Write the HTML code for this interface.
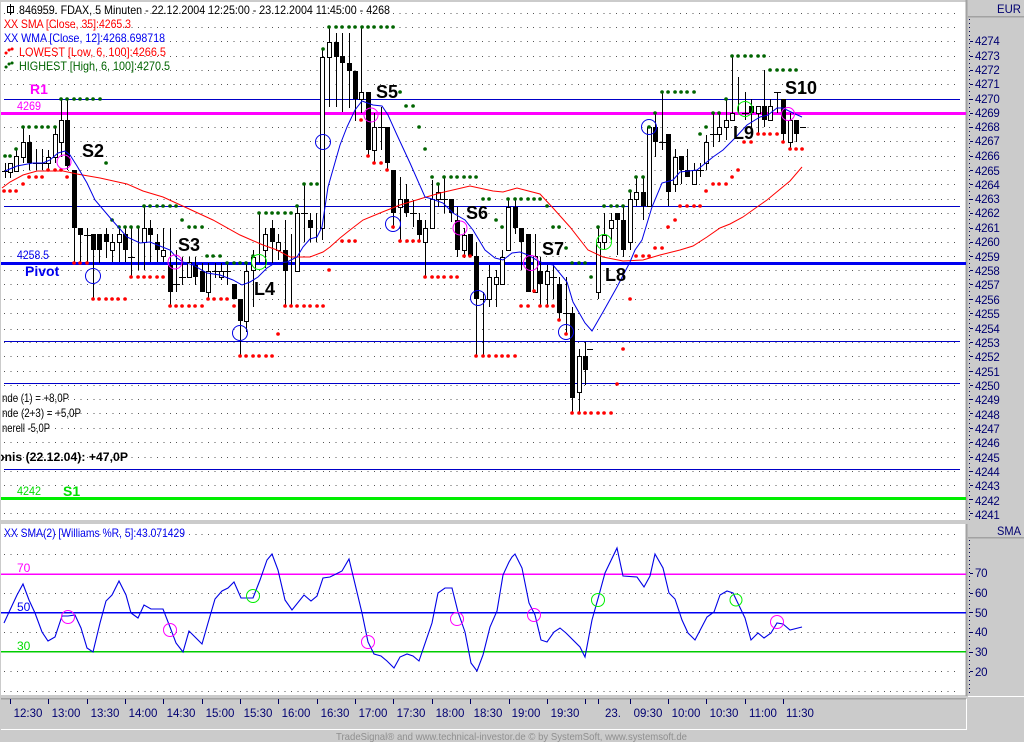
<!DOCTYPE html>
<html><head><meta charset="utf-8"><title>FDAX</title>
<style>html,body{margin:0;padding:0;background:#cbcbcb;overflow:hidden}svg{display:block}text{font-family:"Liberation Sans",sans-serif;white-space:pre}</style>
</head><body>
<svg width="1024" height="742" viewBox="0 0 1024 742" xmlns="http://www.w3.org/2000/svg">
<rect width="1024" height="742" fill="#cbcbcb"/>
<rect x="1" y="2" width="965" height="518" fill="#fff"/>
<rect x="1" y="524" width="965" height="171" fill="#fff"/>
<!-- panel frames -->
<g shape-rendering="crispEdges" fill="none">
<path d="M966.5 0V520M966.5 524V696" stroke="#a2a2a2" stroke-width="2"/>
<path d="M968 16.5H1024M968 537.5H1024M1 698.5H966" stroke="#a2a2a2" stroke-width="1.5"/>
<path d="M968 696.5H1024M0 729.5H966.5V699" stroke="#fff"/>
<path d="M0 698V729" stroke="#a2a2a2" stroke-width="2"/>
<!-- grid dots -->
<path d="M4 13.5H960M4 27.5H960M4 41.5H960M4 56.5H960M4 70.5H960M4 84.5H960M4 127.5H960M4 141.5H960M4 156.5H960M4 170.5H960M4 184.5H960M4 199.5H960M4 213.5H960M4 228.5H960M4 242.5H960M4 256.5H960M4 270.5H960M4 284.5H960M4 299.5H960M4 313.5H960M4 329.5H960M4 342.5H960M4 356.5H960M4 371.5H960M4 385.5H960M4 399.5H960M4 413.5H960M4 428.5H960M4 442.5H960M4 457.5H960M4 471.5H960M4 485.5H960M4 513.5H960M4 534.5H960M4 554.5H960M4 593.5H960M4 632.5H960M4 671.5H960M4 691.5H960" stroke="#555" stroke-dasharray="1 5.375"/>
<!-- axis dots -->
<path d="M969.5 19V520M969.5 540V696" stroke="#000050" stroke-dasharray="1 3"/>
<!-- horizontal lines -->
<path d="M4 99.5H960M4 206.5H960M4 341.5H960M4 383.5H960M4 469.5H960" stroke="#0000c8"/>
<path d="M1 113.5H966" stroke="#f0f" stroke-width="3"/>
<path d="M1 263.5H966" stroke="#0000f0" stroke-width="3"/>
<path d="M1 498.5H966" stroke="#0e0" stroke-width="3"/>
<path d="M1 574H966" stroke="#f0f" stroke-width="1.5"/>
<path d="M1 612.5H966" stroke="#0000f0" stroke-width="1.5"/>
<path d="M1 651.5H966" stroke="#0c0" stroke-width="1.5"/>
<!-- candle wicks -->
<path stroke="#000" d="M5.5 163V178M10.5 163V178M16.5 150V171M23.5 128V163M29.5 135V170M36.5 149V170M42.5 149V170M48.5 150V170M55.5 128V163M61.5 99V157M67.5 99V170M74.5 170V263M80.5 228V263M87.5 228V263M93.5 234V299M99.5 234V263M106.5 228V258M112.5 234V262M119.5 228V262M125.5 228V262M131.5 228V277M138.5 228V270M144.5 206V270M150.5 220V262M157.5 234V262M163.5 228V262M170.5 228V306M176.5 250V292M182.5 257V285M189.5 257V277M195.5 257V285M202.5 263V292M208.5 263V299M215.5 263V278M221.5 263V280M227.5 263V285M234.5 284V299M240.5 299V356M246.5 263V332M253.5 250V307M259.5 213V263M265.5 228V268M272.5 220V263M278.5 234V260M285.5 220V306M291.5 234V306M297.5 206V271M304.5 183V242M310.5 213V242M316.5 213V242M322.5 49V240M329.5 28V107M336.5 33V107M342.5 33V112M349.5 33V108M355.5 71V121M361.5 27V113M368.5 92V157M374.5 113V163M381.5 107V150M387.5 127V170M393.5 170V227M400.5 177V240M406.5 184V217M413.5 200V227M419.5 213V240M425.5 220V277M432.5 180V228M438.5 185V207M444.5 177V213M451.5 199V222M457.5 207V257M464.5 228V258M470.5 234V256M476.5 242V356M483.5 292V356M489.5 265V307M496.5 270V307M502.5 250V284M508.5 199V250M515.5 199V234M521.5 228V270M528.5 234V292M535.5 234V292M540.5 257V306M547.5 265V306M553.5 265V299M559.5 277V320M566.5 277V333M572.5 307V413M579.5 349V413M585.5 342V385M598.5 228V299M604.5 213V250M611.5 213V240M617.5 213V255M623.5 206V257M630.5 191V250M636.5 177V206M643.5 177V220M649.5 127V206M655.5 113V157M662.5 92V150M668.5 134V206M675.5 149V192M681.5 156V184M687.5 149V177M694.5 163V184M700.5 163V177M706.5 135V170M713.5 113V147M719.5 113V142M726.5 99V140M732.5 56V120M738.5 77V113M745.5 92V120M751.5 99V127M758.5 106V134M764.5 70V127M770.5 99V120M777.5 92V113M783.5 99V142M790.5 113V149M796.5 120V142"/>
<!-- doji dashes -->
<path stroke="#000" d="M2 171.5h7M33 163.5h7M39 163.5h7M84 235.5h7M128 257.5h7M173 284.5h7M179 277.5h7M212 271.5h7M224 271.5h7M301 213.5h7M378 127.5h7M410 213.5h7M441 199.5h7M480 299.5h7M550 277.5h7M563 313.5h7M587 349.5h6M659 142.5h7M697 170.5h7M710 134.5h7M742 113.5h7M774 92.5h7M800 127.5h6"/>
<!-- black bodies -->
<path stroke="#000" stroke-width="5" d="M29.5 142V163M67.5 120V166M74.5 170V228M80.5 228V235M93.5 234V250M99.5 234V250M106.5 234V242M125.5 234V250M150.5 228V235M157.5 242V250M170.5 265V292M195.5 265V277M202.5 271V292M234.5 284V299M240.5 299V321M272.5 228V242M285.5 250V271M310.5 220V228M336.5 42V57M342.5 56V63M349.5 63V71M355.5 71V99M368.5 92V150M387.5 127V163M393.5 170V213M406.5 199V213M419.5 220V235M451.5 199V213M457.5 220V250M470.5 234V256M476.5 256V299M515.5 207V228M521.5 228V242M528.5 234V292M540.5 271V284M559.5 284V313M572.5 313V398M585.5 356V370M617.5 213V220M623.5 220V250M643.5 192V206M655.5 127V142M668.5 134V192M681.5 156V170M687.5 170V177M751.5 106V113M764.5 106V120M783.5 99V134M796.5 120V134"/>
</g>
<!-- white bodies -->
<g fill="#fff" stroke="#000" shape-rendering="crispEdges">
<path d="M8.5 163.5h4v9h-4zM14.5 156.5h4v15h-4zM21.5 142.5h4v15h-4zM46.5 157.5h4v6h-4zM53.5 134.5h4v23h-4zM59.5 120.5h4v22h-4zM110.5 242.5h4v8h-4zM117.5 234.5h4v8h-4zM142.5 228.5h4v14h-4zM161.5 250.5h4v6h-4zM187.5 262.5h4v15h-4zM206.5 271.5h4v21h-4zM219.5 271.5h4v6h-4zM244.5 271.5h4v50h-4zM251.5 257.5h4v13h-4zM263.5 234.5h4v16h-4zM276.5 242.5h4v8h-4zM295.5 213.5h4v58h-4zM320.5 57.5h4v171h-4zM327.5 42.5h4v15h-4zM359.5 92.5h4v7h-4zM372.5 127.5h4v23h-4zM398.5 199.5h4v8h-4zM423.5 228.5h4v14h-4zM430.5 199.5h4v29h-4zM436.5 192.5h4v7h-4zM462.5 235.5h4v15h-4zM487.5 277.5h4v22h-4zM494.5 277.5h4v7h-4zM500.5 257.5h4v27h-4zM506.5 207.5h4v43h-4zM533.5 256.5h4v36h-4zM545.5 271.5h4v13h-4zM577.5 356.5h4v36h-4zM596.5 242.5h4v50h-4zM602.5 235.5h4v7h-4zM609.5 220.5h4v8h-4zM628.5 199.5h4v43h-4zM634.5 192.5h4v7h-4zM647.5 127.5h4v79h-4zM673.5 157.5h4v27h-4zM692.5 170.5h4v14h-4zM704.5 142.5h4v21h-4zM717.5 127.5h4v7h-4zM724.5 120.5h4v7h-4zM730.5 113.5h4v7h-4zM756.5 106.5h4v7h-4zM768.5 106.5h4v14h-4zM788.5 120.5h4v22h-4z"/>
</g>
<!-- red dots -->
<path fill="none" stroke="#f00" stroke-width="3.6" stroke-linecap="round" d="M4 191h.1M10 191h.1M16 191h.1M23 184h.1M29 177h.1M36 177h.1M42 177h.1M48 170h.1M55 170h.1M61 170h.1M67 177h.1M74 263h.1M80 263h.1M87 263h.1M93 299h.1M99 299h.1M106 299h.1M112 299h.1M118 299h.1M125 299h.1M131 277h.1M138 277h.1M144 277h.1M150 277h.1M157 277h.1M163 277h.1M170 306h.1M176 306h.1M182 306h.1M189 306h.1M195 306h.1M202 306h.1M208 299h.1M214 299h.1M221 299h.1M227 299h.1M234 306h.1M240 356h.1M246 356h.1M253 356h.1M259 356h.1M266 356h.1M272 356h.1M278 334h.1M285 306h.1M291 306h.1M297 306h.1M304 306h.1M310 306h.1M317 306h.1M323 306h.1M329 270h.1M342 241h.1M349 241h.1M355 241h.1M361 120h.1M368 156h.1M374 163h.1M381 163h.1M387 170h.1M393 227h.1M400 241h.1M407 241h.1M413 241h.1M419 241h.1M425 277h.1M432 277h.1M438 277h.1M444 277h.1M451 277h.1M457 277h.1M464 256h.1M470 256h.1M476 356h.1M483 356h.1M489 356h.1M496 356h.1M502 356h.1M508 356h.1M515 356h.1M521 306h.1M528 306h.1M534 291h.1M540 306h.1M547 306h.1M553 306h.1M559 320h.1M566 334h.1M572 413h.1M579 413h.1M585 413h.1M591 413h.1M598 413h.1M604 413h.1M611 413h.1M617 384h.1M623 349h.1M630 299h.1M636 256h.1M643 256h.1M649 256h.1M655 248h.1M662 248h.1M668 227h.1M675 220h.1M680 206h.1M687 206h.1M694 206h.1M700 206h.1M706 191h.1M713 184h.1M719 184h.1M726 184h.1M732 177h.1M738 170h.1M744 142h.1M751 142h.1M758 134h.1M764 134h.1M770 134h.1M777 134h.1M783 142h.1M790 149h.1M796 149h.1M802 149h.1"/>
<!-- green dots -->
<path fill="none" stroke="#006400" stroke-width="3.6" stroke-linecap="round" d="M5 156h.1M10 156h.1M16 149h.1M23 127h.1M29 127h.1M36 127h.1M42 127h.1M48 127h.1M55 127h.1M61 99h.1M67 99h.1M74 99h.1M80 99h.1M87 99h.1M93 99h.1M100 99h.1M106 163h.1M112 220h.1M119 227h.1M125 227h.1M131 227h.1M138 227h.1M144 206h.1M150 206h.1M157 206h.1M163 206h.1M170 206h.1M176 206h.1M182 220h.1M189 227h.1M195 227h.1M202 227h.1M207 256h.1M213 256h.1M220 256h.1M227 263h.1M234 263h.1M240 263h.1M246 263h.1M253 256h.1M259 213h.1M266 213h.1M272 213h.1M278 213h.1M285 213h.1M291 213h.1M297 206h.1M304 184h.1M311 184h.1M317 184h.1M323 49h.1M329 27h.1M336 27h.1M342 27h.1M349 27h.1M355 27h.1M362 27h.1M368 27h.1M374 27h.1M381 27h.1M387 27h.1M393 27h.1M400 92h.1M406 106h.1M413 106h.1M419 127h.1M425 149h.1M432 177h.1M438 184h.1M444 177h.1M451 177h.1M457 177h.1M464 177h.1M470 177h.1M476 177h.1M483 199h.1M489 199h.1M496 220h.1M502 227h.1M508 199h.1M515 199h.1M521 199h.1M528 199h.1M534 199h.1M540 199h.1M547 206h.1M553 227h.1M559 227h.1M566 248h.1M572 263h.1M579 263h.1M585 263h.1M591 277h.1M598 227h.1M604 206h.1M611 206h.1M617 206h.1M623 206h.1M630 191h.1M636 177h.1M643 177h.1M649 127h.1M655 113h.1M662 92h.1M668 92h.1M675 92h.1M681 92h.1M687 92h.1M694 92h.1M700 134h.1M706 127h.1M713 113h.1M719 113h.1M726 99h.1M732 56h.1M738 56h.1M745 56h.1M751 56h.1M758 56h.1M764 56h.1M770 70h.1M777 70h.1M783 70h.1M790 70h.1M796 70h.1M802 92h.1"/>
<!-- averages -->
<polyline fill="none" stroke="#f00" stroke-width="1" points="2,188 10,182 23,175 37,171 63,171 77,174 100,178 127,184 143,191 163,197 187,208 213,220 240,235 263,245 277,250 290,257 310,257 323,252 330,247 340,238 350,230 363,220 380,213 400,205 423,198 440,193 470,186 493,191 503,192 517,188 540,194 553,208 570,227 588,250 603,257 623,261 643,260 660,255 680,250 693,246 707,237 720,228 730,224 743,217 757,207 767,200 790,181 802,167"/>
<polyline fill="none" stroke="#0000e6" stroke-width="1" points="5,171 17,166 33,163 43,163 50,160 58,153 65,151 70,155 77,166 87,183 95,200 112,220 127,237 140,243 150,242 170,250 177,258 183,262 193,265 207,273 220,275 233,280 242,285 250,282 258,277 267,268 275,263 287,262 297,257 303,247 310,239 317,237 322,227 328,187 340,145 347,127 355,110 362,101 373,105 382,106 388,115 397,135 410,163 425,197 432,199 443,203 453,213 465,220 473,230 485,250 495,258 503,260 512,253 520,252 528,255 540,262 553,265 567,282 573,302 585,323 592,331 603,312 617,287 630,262 635,250 642,240 652,207 662,183 673,180 680,172 697,170 713,157 723,150 735,138 747,125 760,117 768,115 777,108 783,108 793,113 802,117"/>
<!-- circles -->
<g fill="none" stroke="#0000e6"><circle cx="323" cy="142" r="7.5"/><circle cx="93" cy="276" r="7.5"/><circle cx="240" cy="333" r="7.5"/><circle cx="393" cy="224" r="7.5"/><circle cx="478" cy="298" r="7.5"/><circle cx="566" cy="332" r="7.5"/><circle cx="649" cy="127" r="7.5"/></g>
<g fill="none" stroke="#f0f"><circle cx="64" cy="162" r="7"/><circle cx="175" cy="262" r="7"/><circle cx="371" cy="115" r="7"/><circle cx="460" cy="228" r="7"/><circle cx="531" cy="263" r="7.5"/><circle cx="788" cy="114" r="6.5"/></g>
<g fill="none" stroke="#0e0"><circle cx="259" cy="262" r="7.5"/><circle cx="604" cy="242" r="7.5"/><circle cx="745" cy="109" r="7.5"/></g>
<!-- oscillator -->
<polyline fill="none" stroke="#0000e6" stroke-width="1.1" points="4,623 10,610 17,595 23,584 29,600 35,613 42,632 48,641 55,637 62,616 68,616 75,615 81,628 87,648 93,652 100,623 106,601 112,595 119,581 126,595 131,613 138,618 144,605 151,609 163,609 170,627 176,643 183,652 189,631 202,644 208,623 215,599 222,591 228,588 234,582 241,598 253,598 260,580 267,560 272,554 278,570 285,600 292,610 304,595 311,601 317,596 323,578 330,577 342,571 349,559 362,613 368,642 374,654 381,656 387,661 394,668 400,657 407,654 413,656 419,661 432,623 438,593 445,588 452,588 458,612 465,632 471,663 477,671 483,655 490,627 497,611 503,575 509,562 512,557 515,554 522,568 529,603 535,615 541,640 547,642 554,632 560,628 566,633 580,647 585,657 592,620 599,595 605,573 617,548 623,576 637,577 644,587 650,576 655,554 663,568 669,593 675,599 682,620 688,633 695,640 707,617 714,612 720,595 727,591 733,593 745,618 751,640 758,633 764,638 771,633 777,623 783,624 790,630 802,627"/>
<g fill="none" stroke="#f0f"><circle cx="68" cy="617" r="6.5"/><circle cx="170" cy="630" r="6.5"/><circle cx="368" cy="642" r="6.5"/><circle cx="457" cy="619" r="6.5"/><circle cx="534" cy="615" r="6.5"/><circle cx="777" cy="622" r="6.5"/></g>
<g fill="none" stroke="#0e0"><circle cx="253" cy="596" r="6.5"/><circle cx="598" cy="600" r="6.5"/><circle cx="736" cy="600" r="6"/></g>
<!-- legend icons -->
<g fill="none"><path d="M10.5 4V15M7.5 6.5h6v6h-6z" stroke="#000" shape-rendering="crispEdges"/>
<path d="M6 53h.1M9 50h.1M12 49h.1" stroke="#f00" stroke-width="3" stroke-linecap="round"/>
<path d="M6 67h.1M9 64h.1M12 63h.1" stroke="#006400" stroke-width="3" stroke-linecap="round"/></g>
<!-- legend text -->
<g font-size="12">
<text x="19" y="14" fill="#000" textLength="371" lengthAdjust="spacingAndGlyphs">846959. FDAX, 5 Minuten - 22.12.2004 12:25:00 - 23.12.2004 11:45:00 - 4268</text>
<text x="4" y="28" fill="#f00" textLength="127" lengthAdjust="spacingAndGlyphs">XX SMA [Close, 35]:4265.3</text>
<text x="4" y="42" fill="#00e" textLength="161" lengthAdjust="spacingAndGlyphs">XX WMA [Close, 12]:4268.698718</text>
<text x="19" y="56" fill="#f00" textLength="147" lengthAdjust="spacingAndGlyphs">LOWEST [Low, 6, 100]:4266.5</text>
<text x="19" y="70" fill="#006400" textLength="151" lengthAdjust="spacingAndGlyphs">HIGHEST [High, 6, 100]:4270.5</text>
<text x="4" y="537" fill="#00e" textLength="181" lengthAdjust="spacingAndGlyphs">XX SMA(2) [Williams %R, 5]:43.071429</text>
<text x="17" y="110" fill="#f0f" textLength="24" lengthAdjust="spacingAndGlyphs">4269</text>
<text x="17" y="259" fill="#00e" textLength="32" lengthAdjust="spacingAndGlyphs">4258.5</text>
<text x="17" y="495" fill="#0d0" textLength="24" lengthAdjust="spacingAndGlyphs">4242</text>
<text x="17" y="572" fill="#f0f">70</text><text x="17" y="611" fill="#00e">50</text><text x="17" y="650" fill="#0d0">30</text>
<text x="2" y="402" fill="#000" textLength="67" lengthAdjust="spacingAndGlyphs">nde (1) = +8,0P</text>
<text x="2" y="417" fill="#000" textLength="79" lengthAdjust="spacingAndGlyphs">nde (2+3) = +5,0P</text>
<text x="2" y="432" fill="#000" textLength="48" lengthAdjust="spacingAndGlyphs">nerell -5,0P</text>
<text x="-3" y="461" fill="#000" font-weight="bold" textLength="131" lengthAdjust="spacingAndGlyphs">onis (22.12.04): +47,0P</text>
</g>
<g font-weight="bold">
<text x="30" y="94" font-size="14" fill="#f0f">R1</text>
<text x="25" y="276" font-size="14" fill="#00e">Pivot</text>
<text x="63" y="496" font-size="14" fill="#0d0">S1</text>
<g font-size="18" fill="#000">
<text x="82" y="157">S2</text><text x="178" y="251">S3</text><text x="254" y="295">L4</text><text x="376" y="98">S5</text><text x="466" y="219">S6</text><text x="542" y="255">S7</text><text x="605" y="281">L8</text><text x="733" y="139">L9</text><text x="785" y="94">S10</text>
</g></g>
<rect x="0" y="0" width="1" height="742" fill="#cbcbcb"/>
<!-- right axis -->
<g font-size="12" fill="#000070">
<text x="1021" y="13" text-anchor="end" textLength="24" lengthAdjust="spacingAndGlyphs">EUR</text>
<text x="1021" y="535" text-anchor="end" textLength="24" lengthAdjust="spacingAndGlyphs">SMA</text>
</g>
<path shape-rendering="crispEdges" stroke="#000060" d="M970 41.5h3M970 56.5h3M970 70.5h3M970 84.5h3M970 99.5h3M970 113.5h3M970 127.5h3M970 141.5h3M970 156.5h3M970 170.5h3M970 184.5h3M970 199.5h3M970 213.5h3M970 228.5h3M970 242.5h3M970 256.5h3M970 270.5h3M970 284.5h3M970 299.5h3M970 313.5h3M970 328.5h3M970 342.5h3M970 356.5h3M970 371.5h3M970 385.5h3M970 399.5h3M970 413.5h3M970 428.5h3M970 442.5h3M970 457.5h3M970 471.5h3M970 485.5h3M970 499.5h3M970 513.5h3M970 573.5h3M970 593.5h3M970 612.5h3M970 632.5h3M970 652.5h3M970 671.5h3"/>
<g font-size="11.5" fill="#000070" text-anchor="start" style="letter-spacing:-.25px">
<text x="975" y="45">4274</text><text x="975" y="60">4273</text><text x="975" y="74">4272</text><text x="975" y="88">4271</text><text x="975" y="103">4270</text><text x="975" y="117">4269</text><text x="975" y="131">4268</text><text x="975" y="145">4267</text><text x="975" y="160">4266</text><text x="975" y="175">4265</text><text x="975" y="189">4264</text><text x="975" y="203">4263</text><text x="975" y="217">4262</text><text x="975" y="232">4261</text><text x="975" y="246">4260</text><text x="975" y="261">4259</text><text x="975" y="275">4258</text><text x="975" y="289">4257</text><text x="975" y="304">4256</text><text x="975" y="318">4255</text><text x="975" y="333">4254</text><text x="975" y="347">4253</text><text x="975" y="361">4252</text><text x="975" y="376">4251</text><text x="975" y="390">4250</text><text x="975" y="404">4249</text><text x="975" y="419">4248</text><text x="975" y="433">4247</text><text x="975" y="447">4246</text><text x="975" y="462">4245</text><text x="975" y="476">4244</text><text x="975" y="490">4243</text><text x="975" y="505">4242</text><text x="975" y="519">4241</text>
<text x="975" y="577">70</text><text x="975" y="597">60</text><text x="975" y="617">50</text><text x="975" y="636">40</text><text x="975" y="656">30</text><text x="975" y="676">20</text>
</g>
<!-- time axis -->
<path shape-rendering="crispEdges" stroke="#000060" d="M10.5 699v5M48.5 699v5M87.5 699v5M125.5 699v5M163.5 699v5M202.5 699v5M240.5 699v5M278.5 699v5M317.5 699v5M355.5 699v5M393.5 699v5M432.5 699v5M470.5 699v5M509.5 699v5M547.5 699v5M585.5 699v5M598.5 699v5M630.5 699v5M668.5 699v5M706.5 699v5M745.5 699v5M783.5 699v5"/>
<g font-size="11.5" fill="#000070" text-anchor="middle">
<text x="28" y="717">12:30</text><text x="66" y="717">13:00</text><text x="105" y="717">13:30</text><text x="143" y="717">14:00</text><text x="181" y="717">14:30</text><text x="220" y="717">15:00</text><text x="258" y="717">15:30</text><text x="296" y="717">16:00</text><text x="335" y="717">16:30</text><text x="373" y="717">17:00</text><text x="411" y="717">17:30</text><text x="450" y="717">18:00</text><text x="488" y="717">18:30</text><text x="526" y="717">19:00</text><text x="565" y="717">19:30</text><text x="613" y="717">23.</text><text x="648" y="717">09:30</text><text x="686" y="717">10:00</text><text x="724" y="717">10:30</text><text x="763" y="717">11:00</text><text x="800" y="717">11:30</text>
</g>
<text x="336" y="740" font-size="10.5" fill="#8f8f8f" textLength="351" lengthAdjust="spacingAndGlyphs">TradeSignal® and www.technical-investor.de © by SystemSoft, www.systemsoft.de</text>
</svg>
</body></html>
